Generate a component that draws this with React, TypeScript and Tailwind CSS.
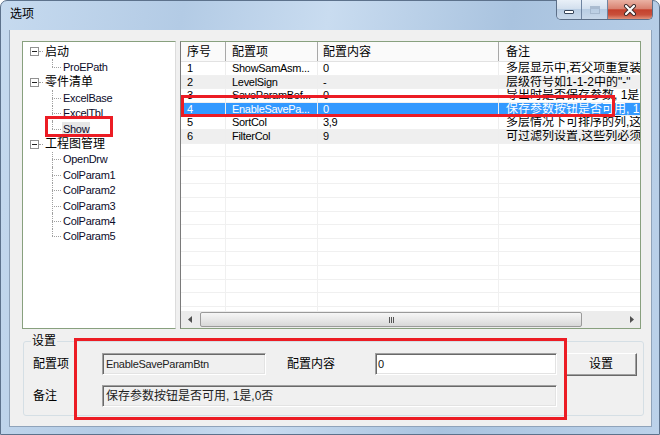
import React from 'react';

type Row = { no: string; key: string; value: string; note: string };

const rows: Row[] = [
  { no: '1', key: 'ShowSamAsm...', value: '0', note: '多层显示中,若父项重复装配' },
  { no: '2', key: 'LevelSign', value: '-', note: '层级符号如1-1-2中的"-"' },
  { no: '3', key: 'SaveParamBef...', value: '0', note: '导出时是否保存参数, 1是,0否' },
  { no: '4', key: 'EnableSavePa...', value: '0', note: '保存参数按钮是否可用, 1是,0否' },
  { no: '5', key: 'SortCol', value: '3,9', note: '多层情况下可排序的列,这些' },
  { no: '6', key: 'FilterCol', value: '9', note: '可过滤列设置,这些列必须' },
];

const tree = [
  { label: '启动', children: ['ProEPath'] },
  { label: '零件清单', children: ['ExcelBase', 'ExcelTbl', 'Show'] },
  {
    label: '工程图管理',
    children: ['OpenDrw', 'ColParam1', 'ColParam2', 'ColParam3', 'ColParam4', 'ColParam5'],
  },
];

const cols = [
  { title: '序号', w: 'w-[45px]', pl: 'pl-[6px]' },
  { title: '配置项', w: 'w-[92px]', pl: 'pl-[6px]' },
  { title: '配置内容', w: 'w-[181px]', pl: 'pl-[5px]' },
  { title: '备注', w: 'w-[200px]', pl: 'pl-[7px]' },
];

const sunken =
  'border border-t-[#a0a0a0] border-l-[#a0a0a0] border-r-white border-b-white shadow-[inset_1px_1px_0_#696969,inset_-1px_-1px_0_#e3e3e3]';

const isCjk = (s: string) => /[\u4e00-\u9fff]/.test(s);

function TreePanel() {
  return (
    <div className="h-full w-[154px] shrink-0 border border-[#88a07e] border-r-[#dcdcdc] bg-white pt-[2px]">
      {tree.map((node) => (
        <div key={node.label}>
          <div className="flex h-[15.4px] items-center pl-[7px]">
            <span className="relative h-[9px] w-[9px] shrink-0 border border-[#919191] bg-white">
              <span className="absolute left-[1px] top-[3px] h-px w-[5px] bg-[#222]" />
            </span>
            <span className="w-[4px] shrink-0 border-t border-dotted border-[#a0a0a0]" />
            <span className="ml-[2px] text-[12px] leading-none text-black">{node.label}</span>
          </div>
          {node.children.map((c, i) => {
            const last = i === node.children.length - 1;
            const selected = c === 'Show';
            return (
              <div key={c} className="relative flex h-[15.4px] items-center pl-[39px]">
                <span
                  className={`absolute left-[29px] top-0 border-l border-dotted border-[#a0a0a0] ${last ? 'h-1/2' : 'h-full'}`}
                />
                <span className="absolute left-[29px] top-1/2 w-[9px] border-t border-dotted border-[#a0a0a0]" />
                <span
                  className={`px-[1px] text-[11px] leading-[14px] tracking-[-0.3px] text-[#0b0b2a] ${selected ? 'bg-[#e6e6e6]' : ''}`}
                >
                  {c}
                </span>
              </div>
            );
          })}
        </div>
      ))}
    </div>
  );
}

function ScrollBar() {
  return (
    <div className="flex h-[17px] shrink-0 bg-[#ececec]">
      <div className="flex w-[17px] items-center justify-center">
        <svg width="4" height="7" viewBox="0 0 4 7">
          <polygon points="4,0 0,3.5 4,7" fill="#505050" />
        </svg>
      </div>
      <div className="flex flex-1 items-center">
        <div className="ml-[2px] flex h-[15px] w-[382px] items-center justify-center rounded-[2px] border border-[#9a9a9a] bg-[linear-gradient(180deg,#f6f6f6_0%,#e8e8e8_50%,#d8d8d8_100%)]">
          <div className="flex gap-[1px]">
            <span className="h-[6px] w-px bg-[#555]" />
            <span className="h-[6px] w-px bg-[#555]" />
            <span className="h-[6px] w-px bg-[#555]" />
          </div>
        </div>
      </div>
      <div className="flex w-[17px] items-center justify-center">
        <svg width="4" height="7" viewBox="0 0 4 7">
          <polygon points="0,0 4,3.5 0,7" fill="#505050" />
        </svg>
      </div>
    </div>
  );
}

function ListPanel() {
  const empties = Array.from({ length: 13 });
  return (
    <div className="flex h-full w-[461px] flex-col overflow-hidden border border-[#88a07e] border-l-[#7a7a7a] bg-white">
      <div className="flex h-[20px] shrink-0 border-b border-[#e2e2e2] bg-[#fafafa]">
        {cols.map((c) => (
          <div
            key={c.title}
            className={`${c.w} ${c.pl} flex shrink-0 items-center border-r border-[#a8a8a8] text-[12px] text-black`}
          >
            {c.title}
          </div>
        ))}
      </div>
      <div className="flex-1 overflow-hidden">
        {rows.map((r, i) => {
          const sel = r.no === '4';
          const bg = sel ? 'bg-[#3399ff] text-white' : i % 2 === 1 ? 'bg-[#efefef] text-black' : 'bg-white text-black';
          const vals = [r.no, r.key, r.value, r.note];
          return (
            <div key={r.no} className={`flex h-[13.6px] border-b border-[#f0f0f0] ${bg}`}>
              {vals.map((v, j) => (
                <div
                  key={j}
                  className={`${cols[j].w} ${cols[j].pl} shrink-0 overflow-hidden whitespace-nowrap border-r border-[#eeeeee] leading-[13px] ${isCjk(v) ? 'text-[12px]' : 'text-[11px] tracking-[-0.3px]'}`}
                >
                  {v}
                </div>
              ))}
            </div>
          );
        })}
        {empties.map((_, i) => (
          <div key={i} className="flex h-[13.6px] border-b border-[#f0f0f0]">
            {cols.map((c) => (
              <div key={c.title} className={`${c.w} shrink-0 border-r border-[#f0f0f0]`} />
            ))}
          </div>
        ))}
      </div>
      <ScrollBar />
    </div>
  );
}

function CaptionButtons() {
  return (
    <div className="-mt-[1px] mr-[6px] ml-auto flex h-[20px] overflow-hidden rounded-b-[5px] border border-t-0 border-[#5c6f88]">
      <div className="flex w-[25px] items-end justify-center border-r border-[#6f84a0] bg-[linear-gradient(180deg,#e9f0f8_0%,#d3e0ee_45%,#b9cde3_50%,#c8d8ea_100%)] pb-[5px]">
        <span className="h-[4px] w-[10px] rounded-[1px] border border-[#38465a] bg-white" />
      </div>
      <div className="flex w-[26px] items-center justify-center border-r border-[#6f84a0] bg-[linear-gradient(180deg,#e9f0f8_0%,#d3e0ee_45%,#b9cde3_50%,#c8d8ea_100%)]">
        <span className="h-[8px] w-[10px] border border-t-[3px] border-[#9fb2c8] bg-transparent opacity-80" />
      </div>
      <div className="flex w-[44px] items-center justify-center bg-[linear-gradient(180deg,#eab2a4_0%,#d98372_45%,#c4412d_52%,#c9503b_78%,#e1917a_100%)]">
        <svg width="14" height="12" viewBox="0 0 14 12">
          <path d="M3 2 L11 10 M11 2 L3 10" stroke="#3b2a2a" strokeWidth="4" strokeLinecap="round" />
          <path d="M3 2 L11 10 M11 2 L3 10" stroke="#ffffff" strokeWidth="2.2" strokeLinecap="round" />
        </svg>
      </div>
    </div>
  );
}

export default function App() {
  return (
    <div className="relative h-[435px] w-[660px] overflow-hidden bg-white font-['Liberation_Sans','Noto_Sans_CJK_SC',sans-serif]">
      <div className="flex h-full flex-col rounded-t-[7px] border border-[#5d728c] bg-[linear-gradient(100deg,#c6daef_0%,#b3cbe5_25%,#c9dcf0_45%,#a9c3df_70%,#bcd2ea_100%)]">
        <div className="flex h-[29px] shrink-0 items-start">
          <span className="pl-[9px] pt-[6px] text-[12px] leading-[14px] text-black">选项</span>
          <CaptionButtons />
        </div>
        <div className="mb-[7px] ml-[8px] mr-[7px] flex flex-1 flex-col border-l border-r border-b border-[#8fa3ba] bg-[#f0f0f0] pl-[12px] pt-[11px]">
          <div className="flex h-[288px] w-[619px] gap-[4px]">
            <TreePanel />
            <ListPanel />
          </div>
          <fieldset className="ml-[1px] mt-[5px] h-[82px] w-[621px] rounded-[3px] border border-[#d5dfe5]">
            <legend className="ml-[7px] px-[1px] text-[12px] leading-[14px] text-black">设置</legend>
            <div className="flex flex-col gap-[10px] pl-[9px] pt-[5px]">
              <div className="flex h-[22px] items-center">
                <span className="w-[69px] text-[12px] text-black">配置项</span>
                <div className={`flex h-[22px] w-[164px] items-center bg-[#f0f0f0] pl-[3px] text-[11px] tracking-[-0.3px] text-[#222] ${sunken}`}>
                  EnableSaveParamBtn
                </div>
                <span className="ml-[21px] w-[88px] text-[12px] text-black">配置内容</span>
                <div className={`flex h-[22px] w-[182px] items-center bg-white pl-[2px] text-[11px] text-[#111] ${sunken}`}>
                  0
                </div>
                <button className="ml-[8px] flex h-[23px] w-[72px] items-center justify-center border border-t-white border-l-white border-r-[#696969] border-b-[#696969] bg-[#f0f0f0] text-[12px] text-black shadow-[inset_-1px_-1px_0_#a0a0a0]">
                  设置
                </button>
              </div>
              <div className="flex h-[22px] items-center">
                <span className="w-[69px] text-[12px] text-black">备注</span>
                <div className={`flex h-[22px] w-[455px] items-center bg-[#f0f0f0] pl-[3px] text-[12px] text-[#222] ${sunken}`}>
                  保存参数按钮是否可用, 1是,0否
                </div>
              </div>
            </div>
          </fieldset>
        </div>
      </div>

      {/* red annotation boxes drawn over the dialog */}
      <div className="pointer-events-none absolute left-[45px] top-[116px] h-[21px] w-[68px] border-[3px] border-[#ec1c24]" />
      <div className="pointer-events-none absolute left-[181px] top-[95px] h-[22px] w-[434px] border-[3px] border-[#ec1c24]" />
      <div className="pointer-events-none absolute left-[74px] top-[338px] h-[82px] w-[493px] border-[3px] border-[#ec1c24]" />
    </div>
  );
}
